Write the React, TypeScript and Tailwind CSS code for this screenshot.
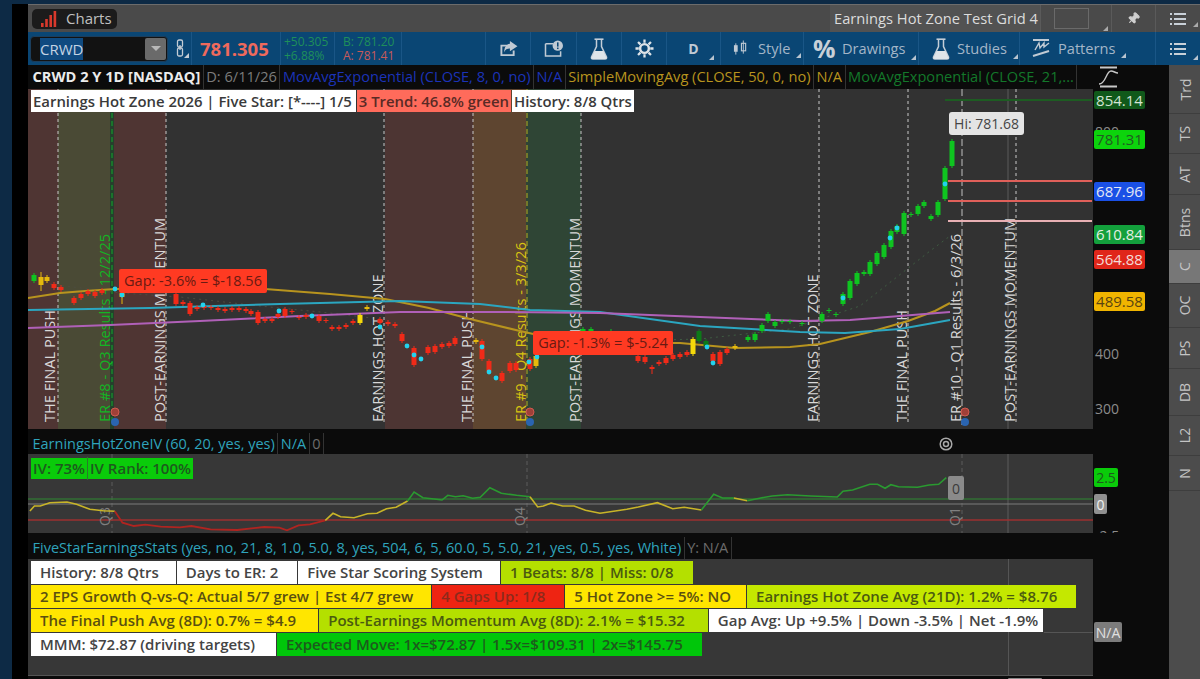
import { Pin } from 'lucide-react'
import type { ReactNode } from 'react'

const RED = '#f02a18'
const GRN = '#0fc420'
const YEL = '#f5d90a'
const CYAN = '#22d3ee'

// x, top, bottom, colour, wick top, wick bottom
const CANDLES: [number, number, number, string, number?, number?][] = [
  [34, 274, 280, GRN], [41, 276, 284, '#e6b90c', 271, 290], [47, 276, 280, '#e6b90c'], [54, 283, 287, RED], [61, 286, 289, RED],
  [74, 297, 302, RED], [81, 293, 297, RED], [88, 290, 293, RED], [95, 291, 295, RED], [102, 289, 292, RED],
  [122, 292, 296, '#e6b90c', 292, 303], [176, 293, 303, RED], [183, 301, 303, RED], [190, 302, 313, RED], [197, 306, 308, RED],
  [204, 305, 307, RED], [211, 306, 307, RED], [218, 307, 309, RED], [225, 308, 310, RED], [232, 307, 309, RED], [239, 307, 309, RED],
  [246, 308, 310, RED], [251, 310, 313, RED], [258, 311, 322, RED], [265, 318, 320, RED], [272, 318, 320, RED], [278, 313, 316, RED],
  [285, 308, 315, RED], [292, 310, 311, RED], [299, 316, 317, RED], [306, 314, 316, RED], [319, 315, 320, RED], [326, 319, 320, RED],
  [332, 326, 328, RED], [339, 326, 328, RED], [346, 324, 326, RED], [353, 320, 322, RED], [360, 314, 322, YEL], [367, 306, 308, '#e6b90c'],
  [380, 318, 322, RED], [388, 321, 323, RED], [395, 323, 325, RED], [402, 333, 340, RED], [414, 347, 364, RED], [428, 346, 352, RED], [435, 345, 351, RED],
  [442, 343, 346, RED], [449, 342, 345, RED], [455, 337, 343, RED], [476, 339, 341, '#e6b90c'], [482, 340, 358, RED], [489, 360, 370, RED],
  [502, 372, 380, RED], [510, 362, 370, RED], [516, 362, 369, RED], [530, 358, 368, RED], [536, 355, 365, '#e6b90c'],
  [583, 328, 331, GRN], [591, 328, 332, GRN], [611, 330, 333, GRN], [638, 355, 360, RED], [645, 356, 361, RED], [652, 366, 368, RED, 364, 373],
  [659, 361, 363, RED], [666, 357, 362, RED], [673, 354, 358, RED], [680, 353, 356, RED], [687, 351, 354, RED], [693, 338, 353, YEL],
  [699, 330, 340, '#0c7a18'], [706, 340, 345, '#0c7a18'], [713, 353, 360, RED], [720, 351, 363, RED], [727, 348, 352, RED], [735, 345, 347, '#e6b90c'],
  [748, 336, 339, GRN], [755, 333, 339, GRN], [762, 324, 330, GRN], [768, 313, 320, GRN], [775, 321, 325, GRN], [782, 320, 321, GRN], [790, 320, 321, GRN],
  [802, 322, 323, GRN], [822, 313, 320, GRN], [829, 309, 310, GRN], [836, 313, 314, GRN], [843, 293, 303, GRN], [850, 280, 297, GRN], [857, 272, 283, GRN],
  [864, 271, 273, GRN], [870, 261, 273, GRN], [877, 252, 263, GRN], [884, 244, 256, GRN], [891, 230, 246, GRN], [897, 225, 231, GRN], [904, 212, 233, GRN],
  [911, 213, 214, GRN], [918, 205, 213, GRN], [924, 201, 205, GRN], [931, 215, 218, GRN], [938, 201, 214, GRN], [945, 167, 198, GRN], [952, 140, 165, GRN],
]

const DOTS = [
  [115, 288], [122, 294], [203, 304], [279, 310], [312, 315], [380, 326], [407, 345], [414, 354], [421, 358], [482, 346], [489, 371], [496, 377],
  [529, 361], [537, 356], [707, 346], [713, 362], [843, 297], [890, 237], [897, 227], [945, 183],
]

const VERTICAL: [number, string, string][] = [
  [55, 'THE FINAL PUSH', '#d8d8d8'],
  [110, 'ER #8 - Q3 Results - 12/2/25', '#12b524'],
  [165, 'POST-EARNINGS MOMENTUM', '#d8d8d8'],
  [383, 'EARNINGS HOT ZONE', '#d8d8d8'],
  [472, 'THE FINAL PUSH', '#d8d8d8'],
  [526, 'ER #9 - Q4 Results - 3/3/26', '#d8c410'],
  [580, 'POST-EARNINGS MOMENTUM', '#d8d8d8'],
  [818, 'EARNINGS HOT ZONE', '#d8d8d8'],
  [907, 'THE FINAL PUSH', '#d8d8d8'],
  [961, 'ER #10 - Q1 Results - 6/3/26', '#d8d8d8'],
  [1015, 'POST-EARNINGS MOMENTUM', '#d8d8d8'],
]

const BANDS: [number, number, string][] = [
  [28, 30, '#4f3533'], [58, 52, '#4a4a35'], [110, 4, '#25402c'], [114, 52, '#4f3533'], [385, 88, '#4d3533'], [473, 53, '#5e4530'], [526, 55, '#2f4535'],
]

const L = (...p: number[]) => p.join(' ')

// IV line traced off the reference, zoomed coordinates
const ivx = (z: number, right = false) => (right ? 600 : 0) + z / 2.613
const ivy = (z: number) => 425 + z / 3
const ivLine = (pts: number[][], right = false) => pts.map(([x, y]) => `${ivx(x, right).toFixed(1)},${ivy(y).toFixed(1)}`).join(' ')

function PriceChart() {
  return (
    <svg viewBox="28 88 1065 340" className="block h-[340px] w-[1065px]">
      <rect x="28" y="88" width="1065" height="340" fill="#323232" />
      {BANDS.map(([x, w, c]) => <rect key={x} x={x} y="88" width={w} height="340" fill={c} />)}
      {[58, 166, 384, 473, 581, 819, 908, 1016].map((x) => (
        <line key={x} x1={x} x2={x} y1="88" y2="424" stroke="#c8c8c8" strokeDasharray="3 3" />
      ))}
      <line x1="112" x2="112" y1="88" y2="424" stroke="#10a82a" strokeDasharray="5 3" />
      <line x1="527" x2="527" y1="88" y2="424" stroke="#b8ad20" strokeDasharray="5 3" />
      <line x1="962" x2="962" y1="88" y2="424" stroke="#c0c0c0" strokeDasharray="7 3" />
      <line x1="1008" x2="1008" y1="88" y2="428" stroke="#5a5a5a" />
      <polyline points="620,340 700,338 790,328 860,305 930,250 950,235" fill="none" stroke="#3f5c42" strokeDasharray="2 4" />
      <polyline points="50,283 120,292 180,296 260,305 330,312 380,318" fill="none" stroke="#4c4c40" strokeDasharray="2 4" />
      <line x1="945" x2="1092" y1="99" y2="99" stroke="#1d5c22" strokeWidth="2" />
      {VERTICAL.map(([x, t, c]) => (
        <text key={t + x} transform={`translate(${x} 421) rotate(-90)`} fontSize="14.6" fill={c}>
          {t}
        </text>
      ))}
      <polyline points={L(28, 297, 60, 292, 85, 290, 115, 288, 200, 287, 265, 288, 330, 293, 385, 298, 429, 307, 470, 318, 520, 330, 560, 339, 620, 342, 680, 342, 735, 347, 790, 346, 820, 343, 870, 331, 908, 320, 935, 310, 950, 302)} fill="none" stroke="#b8941e" strokeWidth="2" />
      <polyline points={L(28, 309, 150, 307, 280, 303, 400, 300, 480, 303, 530, 309, 600, 311, 700, 325, 800, 331, 845, 332, 900, 328, 950, 319)} fill="none" stroke="#2ba6c0" strokeWidth="2" />
      <polyline points={L(28, 327, 110, 324, 200, 320, 300, 315, 400, 311, 500, 311, 600, 312, 700, 316, 800, 320, 850, 319, 950, 311)} fill="none" stroke="#b060b8" strokeWidth="2" />
      {CANDLES.map(([x, a, b, c, wa, wb]) => (
        <g key={x}>
          <line x1={x} x2={x} y1={wa ?? a - 2} y2={wb ?? b + 2} stroke={c} strokeWidth="1" />
          <rect x={x - 2.5} y={a} width="5" height={b - a} fill={c} />
        </g>
      ))}
      {DOTS.map(([x, y]) => <circle key={x + '-' + y} cx={x} cy={y} r="2.4" fill={CYAN} />)}
      <line x1="948" x2="1092" y1="180" y2="180" stroke="#e0605a" strokeWidth="2" />
      <line x1="948" x2="1092" y1="200" y2="200" stroke="#e0605a" strokeWidth="2" />
      <line x1="948" x2="1092" y1="220" y2="220" stroke="#e8b0b4" strokeWidth="2" />
      {[115, 530, 965].map((x) => (
        <g key={x}>
          <circle cx={x} cy="411" r="4" fill="#a04038" stroke="#d05a50" />
          <circle cx={x} cy="421" r="4" fill="#2a64b0" />
        </g>
      ))}
    </svg>
  )
}

function IvChart() {
  return (
    <svg viewBox="28 453 1065 79" className="block h-[79px] w-[1065px]">
      <rect x="28" y="453" width="1065" height="79" fill="#373737" />
      <line x1="112" x2="112" y1="453" y2="532" stroke="#5c5c5c" strokeDasharray="4 3" />
      <line x1="527" x2="527" y1="453" y2="532" stroke="#5c5c5c" strokeDasharray="4 3" />
      <line x1="962" x2="962" y1="453" y2="532" stroke="#5c5c5c" strokeDasharray="4 3" />
      <line x1="1008" x2="1008" y1="453" y2="532" stroke="#5c5c5c" />
      <line x1="28" x2="1093" y1="498" y2="498" stroke="#2e8a32" />
      <line x1="28" x2="1093" y1="503" y2="503" stroke="#7c7c7c" />
      <line x1="28" x2="1093" y1="519" y2="519" stroke="#9c3030" strokeWidth="1.4" />
      {[[110, 'Q3'], [525, 'Q4'], [960, 'Q1']].map(([x, t]) => (
        <text key={t} transform={`translate(${x} 525) rotate(-90)`} fontSize="14" fill="#808080">{t}</text>
      ))}
      <polyline points={ivLine([[78, 255], [90, 240], [105, 240], [130, 230], [175, 228], [200, 235], [235, 250], [270, 254], [300, 256]])} fill="none" stroke="#c8b428" strokeWidth="1.6" />
      <polyline points={ivLine([[300, 256], [320, 290], [350, 300], [380, 296], [420, 302], [470, 304], [500, 300], [550, 310], [620, 312], [690, 303], [730, 305], [750, 313], [780, 298], [810, 295], [850, 283]])} fill="none" stroke="#b02420" strokeWidth="1.8" />
      <polyline points={ivLine([[850, 283], [870, 262], [890, 272], [925, 275], [960, 263], [985, 262], [1010, 248], [1035, 244], [1065, 225]])} fill="none" stroke="#c8b428" strokeWidth="1.6" />
      <polyline points={ivLine([[1065, 225], [1082, 198], [1105, 215], [1140, 220], [1155, 222], [1170, 208], [1190, 212], [1210, 209], [1235, 217], [1255, 214], [1280, 185], [1310, 202], [1350, 208], [1385, 212]])} fill="none" stroke="#2a9a30" strokeWidth="1.6" />
      <polyline points={ivLine([[1385, 212], [1405, 243], [1420, 240], [1440, 231], [1470, 240], [1500, 240], [1530, 253], [1568, 262]])} fill="none" stroke="#c8b428" strokeWidth="1.6" />
      <polyline points={ivLine([[0, 262], [40, 255], [70, 250], [100, 243], [150, 230], [190, 248], [220, 244], [265, 252]], true)} fill="none" stroke="#c8b428" strokeWidth="1.6" />
      <polyline points={ivLine([[265, 252], [297, 205], [320, 216], [350, 216]], true)} fill="none" stroke="#2a9a30" strokeWidth="1.6" />
      <polyline points={ivLine([[350, 216], [385, 224]], true)} fill="none" stroke="#c8b428" strokeWidth="1.6" />
      <polyline points={ivLine([[385, 224], [420, 216], [450, 210], [490, 206], [550, 210], [620, 213], [635, 196], [660, 192], [705, 175], [725, 175], [745, 187], [760, 176], [780, 182], [830, 184], [860, 177], [885, 175], [905, 155]], true)} fill="none" stroke="#2a9a30" strokeWidth="1.6" />
    </svg>
  )
}

function Corner() {
  return <span className="absolute bottom-[1px] right-[-11px] h-0 w-0 border-b-[5px] border-l-[5px] border-b-[#b8c4d0] border-l-transparent" />
}

function ToolBtn({ icon, label, className, gap }: { icon: ReactNode; label: string; className: string; gap: string }) {
  return (
    <div className={`flex h-full items-center border-l border-[#1a5686] ${className}`}>
      <div className={`relative flex items-center text-[#a4b6c8] ${gap}`}>
        {icon}
        <span className="text-[14.6px]">{label}</span>
        <Corner />
      </div>
    </div>
  )
}

function FlaskIcon({ className }: { className: string }) {
  return (
    <svg viewBox="0 0 18 22" className={className}>
      <path d="M4.5 1.2 H13.5" stroke="#c4ced8" strokeWidth="1.6" />
      <path d="M6.5 2 V8.5 L1.5 19 Q1 21 3 21 H15 Q17 21 16.5 19 L11.5 8.5 V2" fill="none" stroke="#c4ced8" strokeWidth="1.5" />
      <path d="M4.6 13 H13.4 L16.5 19.5 Q17 21 15 21 H3 Q1 21 1.5 19.5 Z" fill="#dfe5ea" />
    </svg>
  )
}

function GearIcon() {
  return (
    <svg viewBox="0 0 20 20" className="h-[19px] w-[19px]" stroke="#dde3e8">
      <circle cx="10" cy="10" r="4.6" fill="none" strokeWidth="2.6" />
      <path d="M10 0.5 V4 M10 16 V19.5 M0.5 10 H4 M16 10 H19.5 M3.2 3.2 L5.7 5.7 M14.3 14.3 L16.8 16.8 M16.8 3.2 L14.3 5.7 M5.7 14.3 L3.2 16.8" strokeWidth="2.4" />
    </svg>
  )
}

function MenuIcon() {
  return (
    <svg viewBox="0 0 16 14" className="h-[14px] w-[16px]" fill="#c8d0d8">
      <rect x="0" y="1" width="2" height="2" /><rect x="4" y="1" width="12" height="2" />
      <rect x="0" y="6" width="2" height="2" /><rect x="4" y="6" width="12" height="2" />
      <rect x="0" y="11" width="2" height="2" /><rect x="4" y="11" width="12" height="2" />
    </svg>
  )
}

function HeaderBar() {
  return (
    <div className="flex h-[28px] shrink-0 items-center border-t border-[#6c6c6c] bg-[#4a4a4a] pl-[4px]">
      <div className="flex h-[20px] w-[85px] items-center gap-[7px] rounded-[5px] bg-[#1b1b1b] pl-[9px]">
        <svg viewBox="0 0 18 16" className="h-[16px] w-[18px]">
          <rect x="0" y="12" width="2.6" height="4" fill="#d8392c" />
          <rect x="4.2" y="8" width="2.6" height="8" fill="#d8392c" />
          <rect x="8.4" y="4" width="2.6" height="12" fill="#d8392c" />
          <rect x="12.6" y="0" width="2.6" height="16" fill="#d8392c" />
        </svg>
        <span className="text-[15px] text-[#c0c0c0]">Charts</span>
      </div>
      <div className="ml-auto flex h-full w-[210px] items-center bg-[#525252]">
        <span className="whitespace-nowrap pl-[4px] text-[14.7px] text-[#dcdcdc]">Earnings Hot Zone Test Grid 4</span>
      </div>
      <div className="flex h-full w-[71px] items-center border-l border-[#5a5a5a] pl-[13px]">
        <div className="relative h-[21px] w-[35px] border border-[#6a6a6a]"><span className="absolute bottom-[-3px] right-[-20px] h-0 w-0 border-b-[5px] border-l-[5px] border-b-[#aaa] border-l-transparent" /></div>
      </div>
      <div className="flex h-full w-[44px] items-center justify-center border-l border-[#5a5a5a]">
        <Pin size={13} className="rotate-45 text-[#d0d0d0]" fill="#d0d0d0" />
      </div>
      <div className="relative flex h-full w-[45px] items-center justify-center border-l border-[#5a5a5a]">
        <MenuIcon />
        <span className="absolute bottom-[5px] right-[2px] h-0 w-0 border-b-[5px] border-l-[5px] border-b-[#aaa] border-l-transparent" />
      </div>
    </div>
  )
}

function Toolbar() {
  return (
    <div className="flex h-[33px] shrink-0 items-center bg-[#0a4674]">
      <div className="ml-[2px] flex h-[26px] w-[138px] items-center justify-between rounded-[4px] border border-[#1c3e5c] bg-[#121212]">
        <span className="ml-[9px] bg-[#0f4a80] text-[15px] leading-[22px] text-[#c4d4e4]">CRWD</span>
        <div className="mr-[1px] flex h-[22px] w-[21px] items-center justify-center rounded-[2px] bg-[#6a6a6a]">
          <span className="h-0 w-0 border-x-[5px] border-t-[5px] border-x-transparent border-t-[#b8b8b8]" />
        </div>
      </div>
      <svg viewBox="0 0 14 20" className="ml-[7px] h-[20px] w-[14px]" fill="none" stroke="#c4ccd4" strokeWidth="1.3">
        <rect x="2.5" y="1" width="5" height="7" rx="1.5" />
        <rect x="2.5" y="9" width="5" height="8" rx="1.5" />
        <line x1="5" y1="6" x2="5" y2="11" />
        <path d="M9 19 L14 19 L14 14 Z" fill="#c4ccd4" stroke="none" />
      </svg>
      <div className="ml-[2px] flex h-full w-[89px] items-center border-l border-[#1a5686] pl-[8px] text-[18.5px] font-bold text-[#ef6a5c]">781.305</div>
      <div className="flex h-full w-[54px] flex-col justify-center border-l border-[#1a5686] pl-[3px] text-[12px] leading-[14px] text-[#1f8f5a]">
        <span>+50.305</span>
        <span>+6.88%</span>
      </div>
      <div className="flex h-full w-[67px] flex-col justify-center border-l border-[#1a5686] pl-[8px] text-[12px] leading-[14px]">
        <span className="text-[#1f8f5a]">B: 781.20</span>
        <span className="text-[#c85a5a]">A: 781.41</span>
      </div>
      <div className="h-full flex-1 border-l border-[#1a5686]" />
      <div className="flex h-full w-[45px] items-center justify-center border-l border-[#1a5686]">
        <svg viewBox="0 0 20 18" className="h-[17px] w-[20px]">
          <path d="M2 5 H9 V7 H4 V15 H15 V11 H17 V17 H2 Z" fill="#c0cad4" />
          <path d="M12 1 L20 6.5 L12 12 V9 C9 9 7 10 6 13 C6 8 8 4.5 12 4 Z" fill="#c0cad4" />
        </svg>
      </div>
      <div className="flex h-full w-[46px] items-center justify-center border-l border-[#1a5686]">
        <svg viewBox="0 0 20 18" className="h-[17px] w-[20px]">
          <path d="M1 4 H9 M1 4 V17 H17 V12" fill="none" stroke="#c0cad4" strokeWidth="1.6" />
          <circle cx="14" cy="6" r="5.5" fill="#c0cad4" />
          <rect x="13.2" y="2.5" width="1.6" height="4.5" fill="#0a4674" />
          <rect x="13.2" y="8" width="1.6" height="1.6" fill="#0a4674" />
        </svg>
      </div>
      <div className="flex h-full w-[45px] items-center justify-center border-l border-[#1a5686]">
        <FlaskIcon className="h-[22px] w-[18px]" />
      </div>
      <div className="flex h-full w-[45px] items-center justify-center border-l border-[#1a5686]">
        <GearIcon />
      </div>
      <div className="relative flex h-full w-[54px] items-center justify-center border-l border-[#1a5686] text-[14px] font-bold text-[#c0cad4]">
        D<span className="absolute bottom-[5px] right-[6px] h-0 w-0 border-b-[5px] border-l-[5px] border-b-[#b8c4d0] border-l-transparent" />
      </div>
      <ToolBtn
        className="w-[83px] pl-[12px]"
        gap="gap-[10px]"
        label="Style"
        icon={
          <svg viewBox="0 0 16 18" className="h-[18px] w-[15px]" fill="#c0cad4">
            <line x1="3" x2="3" y1="4" y2="16" stroke="#c0cad4" /><rect x="1" y="6" width="4" height="7" />
            <line x1="11" x2="11" y1="1" y2="15" stroke="#c0cad4" /><rect x="9" y="4" width="4.5" height="8" fill="none" stroke="#c0cad4" strokeWidth="1.2" />
          </svg>
        }
      />
      <ToolBtn
        className="w-[115px] pl-[9px]"
        gap="gap-[6px]"
        label="Drawings"
        icon={<span className="w-[23px] text-[25px] font-bold leading-none text-[#c8d0d8]">%</span>}
      />
      <ToolBtn
        className="w-[101px] pl-[12px]"
        gap="gap-[6px]"
        label="Studies"
        icon={<FlaskIcon className="h-[22px] w-[20px]" />}
      />
      <ToolBtn
        className="w-[136px] pl-[12px]"
        gap="gap-[8px]"
        label="Patterns"
        icon={
          <svg viewBox="0 0 18 20" className="h-[20px] w-[18px]" fill="none" stroke="#c0cad4" strokeWidth="1.4">
            <line x1="1" x2="17" y1="2" y2="2" strokeWidth="2" />
            <path d="M3 12 L7 5 L8 10 L12 5 L12 9 L17 5" />
            <line x1="1" x2="17" y1="18" y2="13" strokeWidth="2" />
          </svg>
        }
      />
      <div className="relative flex h-full w-[45px] items-center justify-center border-l border-[#1a5686]">
        <MenuIcon />
        <span className="absolute bottom-[5px] right-[2px] h-0 w-0 border-b-[5px] border-l-[5px] border-b-[#b8c4d0] border-l-transparent" />
      </div>
    </div>
  )
}

function LegendItem({ children, className }: { children: ReactNode; className: string }) {
  return <span className={`flex h-full items-center whitespace-nowrap border-r border-[#333] px-[2.5px] ${className}`}>{children}</span>
}

function Badge({ top, className, children }: { top: string; className: string; children: ReactNode }) {
  return (
    <div className={`absolute left-[1px] flex items-center justify-center rounded-[2px] ${top} ${className}`}>{children}</div>
  )
}

function AxisText({ top, children }: { top: string; children: ReactNode }) {
  return <span className={`absolute left-[2px] text-[14px] text-[#8c8c8c] ${top}`}>{children}</span>
}

function ChartPane() {
  const box = 'h-[22px] flex items-center text-[14.9px] font-semibold whitespace-nowrap'
  return (
    <div className="flex h-[364px] shrink-0">
      <div className="flex w-[1065px] flex-col">
        <div className="flex h-[24px] items-center bg-[#0b0b0b] pl-[2px] text-[14.6px]">
          <LegendItem className="font-bold text-[#ececec]">CRWD 2 Y 1D [NASDAQ]</LegendItem>
          <LegendItem className="text-[#7c7c7c]">D: 6/11/26</LegendItem>
          <LegendItem className="text-[#1b33b8]">MovAvgExponential (CLOSE, 8, 0, no)</LegendItem>
          <LegendItem className="text-[#1b33b8]">N/A</LegendItem>
          <LegendItem className="text-[#b8941e]">SimpleMovingAvg (CLOSE, 50, 0, no)</LegendItem>
          <LegendItem className="text-[#b8941e]">N/A</LegendItem>
          <LegendItem className="text-[#13782a]">MovAvgExponential (CLOSE, 21,...</LegendItem>
        </div>
        <div className="relative h-[340px]">
          <PriceChart />
          <div className="absolute left-[3px] top-[1px] flex gap-px text-[#3a3a3a]">
            <span className={`${box} bg-white pl-[2px] pr-[4px]`}>Earnings Hot Zone 2026 | Five Star: [*----] 1/5</span>
            <span className={`${box} bg-[#ff6b5b] px-[2px] text-[#5a2a25]`}>3 Trend: 46.8% green</span>
            <span className={`${box} bg-white px-[2px]`}>History: 8/8 Qtrs</span>
          </div>
          <div className="absolute left-[91px] top-[180px] flex h-[24px] w-[148px] items-center justify-center rounded-[2px] bg-[#ff3a22] text-[14.5px] text-[#6a1a12]">Gap: -3.6% = $-18.56</div>
          <div className="absolute left-[505px] top-[242px] flex h-[24px] w-[140px] items-center justify-center rounded-[2px] bg-[#ff3a22] text-[14.5px] text-[#6a1a12]">Gap: -1.3% = $-5.24</div>
          <div className="absolute left-[921px] top-[23px] flex h-[23px] w-[75px] items-center justify-center rounded-[3px] bg-[#e4e4e4] text-[14px] text-[#444]">Hi: 781.68</div>
        </div>
      </div>
      <div className="relative flex-1 bg-[#0b0b0b]">
        <svg viewBox="0 0 24 22" className="absolute left-[4px] top-[1px] h-[22px] w-[24px]" fill="none" stroke="#c8c8c8" strokeWidth="1.4">
          <line x1="3" x2="20" y1="1.5" y2="1.5" strokeWidth="2" />
          <path d="M2 18 C9 18 9 5 14 5 C17 5 18 7 21 7" />
          <line x1="3" x2="20" y1="20.5" y2="20.5" strokeWidth="2" />
        </svg>
        <Badge top="top-[26px]" className="h-[18px] w-[51px] bg-[#10591a] text-[15px] text-[#d4e4d4]">854.14</Badge>
        <AxisText top="top-[56px]">800</AxisText>
        <Badge top="top-[65px]" className="h-[19px] w-[51px] bg-[#0cd40c] text-[15px] text-[#235a23]">781.31</Badge>
        <Badge top="top-[117px]" className="h-[19px] w-[51px] bg-[#1a50e6] text-[15px] text-[#e4e8f4]">687.96</Badge>
        <Badge top="top-[160px]" className="h-[19px] w-[51px] bg-[#13a03c] text-[15px] text-[#e4f0e4]">610.84</Badge>
        <Badge top="top-[185px]" className="h-[19px] w-[51px] bg-[#e0261a] text-[15px] text-[#f4dcd8]">564.88</Badge>
        <Badge top="top-[227px]" className="h-[19px] w-[51px] bg-[#f0b400] text-[15px] text-[#5a4410]">489.58</Badge>
        <AxisText top="top-[278px]">400</AxisText>
        <AxisText top="top-[333px]">300</AxisText>
      </div>
    </div>
  )
}

function IvPane() {
  return (
    <div className="mt-[4px] flex h-[100px] shrink-0">
      <div className="w-[1065px]">
        <div className="relative flex h-[21px] items-center bg-[#0b0b0b] pl-[2px] text-[14.5px]">
          <LegendItem className="text-[#2fa4bc]">EarningsHotZoneIV (60, 20, yes, yes)</LegendItem>
          <LegendItem className="text-[#2fa4bc]">N/A</LegendItem>
          <LegendItem className="text-[#6c6c6c]">0</LegendItem>
          <svg viewBox="0 0 14 14" className="absolute left-[911px] top-[4px] h-[14px] w-[14px]" fill="none" stroke="#a8a8a8" strokeWidth="1.5">
            <circle cx="7" cy="7" r="5.8" /><circle cx="7" cy="7" r="2.5" />
          </svg>
        </div>
        <div className="relative h-[79px]">
          <IvChart />
          <div className="absolute left-[3px] top-[4px] flex h-[21px] items-center bg-[#0acb0a] text-[15px] font-semibold text-[#1d5a1d]">
            <span className="border-r border-[#2a7a2a] px-[2px]">IV: 73%</span>
            <span className="px-[2px]">IV Rank: 100%</span>
          </div>
          <div className="absolute left-[920px] top-[22px] flex h-[24px] w-[16px] items-center justify-center rounded-[2px] bg-[#8a8a8a] text-[14px] text-[#3a3a3a]">0</div>
        </div>
      </div>
      <div className="relative flex-1 overflow-hidden bg-[#0b0b0b]">
        <Badge top="top-[35px]" className="h-[19px] w-[24px] bg-[#0acb0a] text-[14px] text-[#1d5a1d]">2.5</Badge>
        <Badge top="top-[61px]" className="h-[20px] w-[13px] bg-[#909090] text-[14px] text-[#f0f0f0]">0</Badge>
        <AxisText top="top-[92px]">-2.5</AxisText>
      </div>
    </div>
  )
}

const CELL = 'flex h-[23px] items-center pl-[9px] whitespace-nowrap text-[15px] font-semibold'

function StatsPane() {
  return (
    <div className="mt-[4px] flex h-[139px] shrink-0">
      <div className="relative w-[1065px] border-b border-[#555] bg-[#373737]">
        <div className="absolute bottom-0 left-[980px] top-0 w-px bg-[#555]" />
        <div className="absolute left-[1016px] right-0 top-[95px] h-px bg-[#555]" />
        <div className="relative flex h-[22px] items-center bg-[#0b0b0b] pl-[2px] text-[14.5px]">
          <LegendItem className="text-[#2fa4bc]">FiveStarEarningsStats (yes, no, 21, 8, 1.0, 5.0, 8, yes, 504, 6, 5, 60.0, 5, 5.0, 21, yes, 0.5, yes, White)</LegendItem>
          <LegendItem className="text-[#6c6c6c]">Y: N/A</LegendItem>
        </div>
        <div className="relative flex flex-col gap-px pl-[3px] pt-[2px] text-[#444]">
          <div className="flex gap-px">
            <span className={`${CELL} bg-white pr-[17px]`}>History: 8/8 Qtrs</span>
            <span className={`${CELL} bg-white pr-[19px]`}>Days to ER: 2</span>
            <span className={`${CELL} bg-white pr-[17px]`}>Five Star Scoring System</span>
            <span className={`${CELL} bg-[#b4e000] pr-[19px] text-[#4a5a10]`}>1 Beats: 8/8 | Miss: 0/8</span>
          </div>
          <div className="flex gap-px">
            <span className={`${CELL} bg-[#ffe600] pr-[18px] text-[#5a5010]`}>2 EPS Growth Q-vs-Q: Actual 5/7 grew | Est 4/7 grew</span>
            <span className={`${CELL} bg-[#ee2412] pr-[19px] text-[#8c2a1c]`}>4 Gaps Up: 1/8</span>
            <span className={`${CELL} bg-[#ffe600] pr-[15px] text-[#5a5010]`}>5 Hot Zone &gt;= 5%: NO</span>
            <span className={`${CELL} bg-[#c4e800] pr-[19px] text-[#4a5a10]`}>Earnings Hot Zone Avg (21D): 1.2% = $8.76</span>
          </div>
          <div className="flex gap-px">
            <span className={`${CELL} bg-[#ffe600] pr-[22px] text-[#5a5010]`}>The Final Push Avg (8D): 0.7% = $4.9</span>
            <span className={`${CELL} bg-[#b4e000] pr-[23px] text-[#4a5a10]`}>Post-Earnings Momentum Avg (8D): 2.1% = $15.32</span>
            <span className={`${CELL} bg-white pr-[5px]`}>Gap Avg: Up +9.5% | Down -3.5% | Net -1.9%</span>
          </div>
          <div className="flex gap-px">
            <span className={`${CELL} bg-white pr-[21px]`}>MMM: $72.87 (driving targets)</span>
            <span className={`${CELL} bg-[#00c60a] pr-[19px] text-[#1d5a1d]`}>Expected Move: 1x=$72.87 | 1.5x=$109.31 | 2x=$145.75</span>
          </div>
        </div>
      </div>
      <div className="relative flex-1 bg-[#0b0b0b]">
        <Badge top="top-[85px]" className="h-[20px] w-[28px] bg-[#7c7c7c] text-[14px] text-[#e0e0e0]">N/A</Badge>
      </div>
    </div>
  )
}

const TABS: [string, string][] = [
  ['Trd', 'h-[49px]'], ['TS', 'h-[40px]'], ['AT', 'h-[41px]'], ['Btns', 'h-[55px]'], ['C', 'h-[34px]'],
  ['OC', 'h-[44px]'], ['PS', 'h-[41px]'], ['DB', 'h-[47px]'], ['L2', 'h-[40px]'], ['N', 'h-[35px]'],
]

function SideTabs() {
  return (
    <div className="flex w-[31px] shrink-0 flex-col bg-[#4c4c4c]">
      {TABS.map(([t, h]) => (
        <div
          key={t}
          className={`flex items-center justify-center border-b border-[#3e3e3e] ${h} ${t === 'C' ? 'bg-[#777]' : ''}`}
        >
          <span className="-rotate-90 whitespace-nowrap text-[14px] text-[#c4c4c4]">{t}</span>
        </div>
      ))}
    </div>
  )
}

export default function App() {
  return (
    <div className="flex h-[679px] w-[1200px] overflow-hidden bg-[#0d2a45] pl-[12px] pt-[4px] font-['Open_Sans',sans-serif]">
      <div className="w-[16px] shrink-0 bg-black" />
      <div className="flex min-w-0 flex-1 flex-col">
        <HeaderBar />
        <Toolbar />
        <div className="flex min-h-0 flex-1 bg-[#0b0b0b]">
          <div className="flex flex-1 flex-col">
            <ChartPane />
            <IvPane />
            <StatsPane />
            <div className="ml-[980px] mt-[2px] h-[2px] w-[34px] rounded-t-[2px] bg-[#8a8a8a]" />
          </div>
          <SideTabs />
        </div>
      </div>
    </div>
  )
}
